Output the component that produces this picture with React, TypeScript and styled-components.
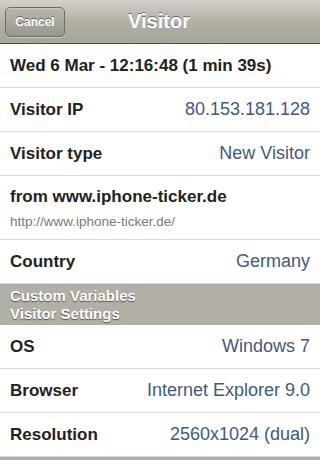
import React from 'react';
import styled, { createGlobalStyle } from 'styled-components';

const Global = createGlobalStyle`
  html, body {
    margin: 0;
    padding: 0;
    background: #ffffff;
    font-family: 'Liberation Sans', Arial, Helvetica, sans-serif;
  }
`;

const Style = {
  Page: styled.div`
    width: 320px;
    height: 460px;
    overflow: hidden;
    background: #ffffff;
    display: flex;
    flex-direction: column;
  `,
  NavBar: styled.div`
    position: relative;
    height: 43px;
    flex: none;
    display: flex;
    align-items: center;
    justify-content: center;
    background: linear-gradient(#d3d1ca, #b2b0a6 50%, #a6a499);
    border-bottom: 1px solid #4e4d48;
  `,
  Cancel: styled.button`
    position: absolute;
    left: 5px;
    top: 7px;
    width: 60px;
    height: 30px;
    border-radius: 5px;
    border: 1px solid #6f6e66;
    background: linear-gradient(#b8b6ad, #9a988e);
    box-shadow: inset 0 1px 0 rgba(255, 255, 255, 0.25), 0 1px 0 rgba(255, 255, 255, 0.35);
    color: #ffffff;
    font-family: 'Liberation Sans', Arial, sans-serif;
    font-weight: bold;
    font-size: 12px;
    text-shadow: 0 -1px 0 rgba(0, 0, 0, 0.45);
    padding: 0;
  `,
  Title: styled.h1`
    margin: 0 0 0 -2px;
    color: #ffffff;
    font-size: 20px;
    font-weight: bold;
    text-shadow: 0 -1px 0 rgba(0, 0, 0, 0.45);
  `,
  Row: styled.div<{ tall?: boolean }>`
    height: ${({ tall }) => (tall ? 63 : 43)}px;
    flex: none;
    border-bottom: 1px solid #dcdcdc;
    padding: 0 10px;
    display: flex;
    flex-direction: ${({ tall }) => (tall ? 'column' : 'row')};
    align-items: ${({ tall }) => (tall ? 'flex-start' : 'center')};
    justify-content: ${({ tall }) => (tall ? 'center' : 'space-between')};
    &:last-child {
      border-bottom: none;
    }
  `,
  Label: styled.span`
    color: #222222;
    font-size: 17px;
    font-weight: bold;
  `,
  Value: styled.span`
    color: #41597f;
    font-size: 18px;
  `,
  Sub: styled.span`
    color: #7a7a7a;
    font-size: 13.5px;
    margin-top: 7px;
  `,
  Header: styled.div`
    flex: none;
    height: 41px;
    background: #b1afa6;
    padding: 3px 10px 0;
    box-sizing: border-box;
    display: flex;
    flex-direction: column;
    color: #ffffff;
    font-size: 15px;
    font-weight: bold;
    line-height: 18px;
    text-shadow: 0 1px 1px rgba(0, 0, 0, 0.55);
  `,
};

const rowsTop: [string, string][] = [
  ['Visitor IP', '80.153.181.128'],
  ['Visitor type', 'New Visitor'],
];

const rowsSettings: [string, string][] = [
  ['OS', 'Windows 7'],
  ['Browser', 'Internet Explorer 9.0'],
  ['Resolution', '2560x1024 (dual)'],
];

const Row = ({ label, value }: { label: string; value: string }) => (
  <Style.Row>
    <Style.Label>{label}</Style.Label>
    <Style.Value>{value}</Style.Value>
  </Style.Row>
);

const App = () => {
  return (
    <Style.Page>
      <Global />
      <Style.NavBar>
        <Style.Cancel>Cancel</Style.Cancel>
        <Style.Title>Visitor</Style.Title>
      </Style.NavBar>
      <Style.Row>
        <Style.Label>Wed 6 Mar - 12:16:48 (1 min 39s)</Style.Label>
      </Style.Row>
      {rowsTop.map(([l, v]) => (
        <Row key={l} label={l} value={v} />
      ))}
      <Style.Row tall>
        <Style.Label>from www.iphone-ticker.de</Style.Label>
        <Style.Sub>http://www.iphone-ticker.de/</Style.Sub>
      </Style.Row>
      <Row label="Country" value="Germany" />
      <Style.Header>
        <span>Custom Variables</span>
        <span>Visitor Settings</span>
      </Style.Header>
      {rowsSettings.map(([l, v]) => (
        <Row key={l} label={l} value={v} />
      ))}
      <Style.Header />
    </Style.Page>
  );
};

export default App;
